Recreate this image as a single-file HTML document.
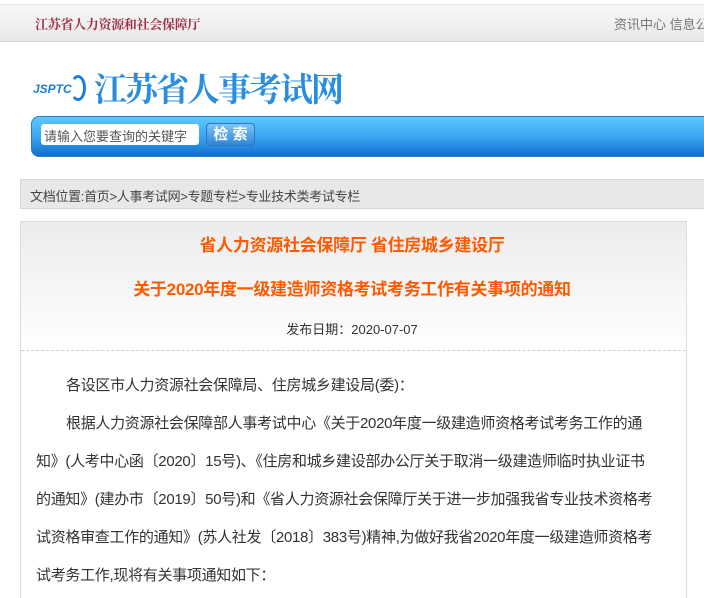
<!DOCTYPE html>
<html><head><meta charset="utf-8"><style>
*{margin:0;padding:0;box-sizing:border-box}
html,body{width:704px;height:598px;overflow:hidden}
body{background:#fff;font-family:"Liberation Sans","Noto Sans CJK SC",sans-serif;position:relative}
.a{position:absolute;white-space:nowrap}
.top{left:0;top:4px;width:704px;height:38px;background:linear-gradient(#f7f7f7,#e9e9e9);border-top:1px solid #e6e6e6;border-bottom:1px solid #d6d6d6}
.p{font-size:15px;color:#333;line-height:20px;letter-spacing:-0.3px}
</style></head><body>
<div class="a top"></div>
<div class="a" style="left:35px;top:14px;font-size:13px;font-weight:bold;color:#9e2f4a;font-family:'Noto Serif CJK SC',serif;letter-spacing:-0.3px">江苏省人力资源和社会保障厅</div>
<div class="a" style="left:614px;top:14px;font-size:13px;color:#777">资讯中心 信息公开</div>
<div class="a" style="left:33px;top:82px;font-size:12px;font-style:italic;font-weight:bold;color:#1b7fd8">JSPTC</div>
<div class="a" style="left:70px;top:75px;width:16px;height:26px;border:3px solid #1b7fd8;border-left-color:transparent;border-radius:50%"></div>
<div class="a" style="left:94px;top:64px;font-size:33px;font-weight:bold;color:#2a8de0;font-family:'Noto Serif CJK SC',serif;letter-spacing:-2px">江苏省人事考试网</div>
<div class="a" style="left:31px;top:116px;width:690px;height:41px;border-radius:8px;background:linear-gradient(#5cc9ff,#3aa6f0 50%,#0f6fd0);border:1px solid #2a80c8"></div>
<div class="a" style="left:41px;top:124px;width:158px;height:21px;background:#fff;border-radius:3px;font-size:13px;color:#555;padding:2px 3px">请输入您要查询的关键字</div>
<div class="a" style="left:206px;top:123px;width:49px;height:23px;border-radius:4px;background:linear-gradient(#7fc4f5,#2f86d6);border:1px solid #2a78c0;color:#fff;font-weight:bold;font-size:15px;text-align:center;line-height:21px">检 索</div>
<div class="a" style="left:20px;top:179px;width:690px;height:30px;background:#e8e8e8;border:1px solid #d8d8d8"></div>
<div class="a" style="left:30px;top:186px;font-size:13px;color:#444;letter-spacing:-0.3px">文档位置:首页&gt;人事考试网&gt;专题专栏&gt;专业技术类考试专栏</div>
<div class="a" style="left:20px;top:221px;width:667px;height:400px;border:1px solid #ddd;background:linear-gradient(#ececec,#fff 130px,#fff)"></div>
<div class="a" style="left:21px;top:350px;width:665px;border-top:1px dashed #ccc"></div>
<div class="a" style="left:0;width:704px;text-align:center;top:231px;font-size:17px;font-weight:bold;color:#ff5a00;letter-spacing:-0.3px">省人力资源社会保障厅 省住房城乡建设厅</div>
<div class="a" style="left:0;width:704px;text-align:center;top:275px;font-size:17px;font-weight:bold;color:#ff5a00;letter-spacing:-0.3px">关于2020年度一级建造师资格考试考务工作有关事项的通知</div>
<div class="a" style="left:0;width:704px;text-align:center;top:319px;font-size:13px;color:#333">发布日期：2020-07-07</div>
<div class="a p" style="left:66px;top:376px">各设区市人力资源社会保障局、住房城乡建设局(委)：</div>
<div class="a p" style="left:66px;top:414px">根据人力资源社会保障部人事考试中心《关于2020年度一级建造师资格考试考务工作的通</div>
<div class="a p" style="left:36px;top:452px">知》(人考中心函〔2020〕15号)、《住房和城乡建设部办公厅关于取消一级建造师临时执业证书</div>
<div class="a p" style="left:36px;top:490px">的通知》(建办市〔2019〕50号)和《省人力资源社会保障厅关于进一步加强我省专业技术资格考</div>
<div class="a p" style="left:36px;top:528px">试资格审查工作的通知》(苏人社发〔2018〕383号)精神,为做好我省2020年度一级建造师资格考</div>
<div class="a p" style="left:36px;top:566px">试考务工作,现将有关事项通知如下：</div>
</body></html>
